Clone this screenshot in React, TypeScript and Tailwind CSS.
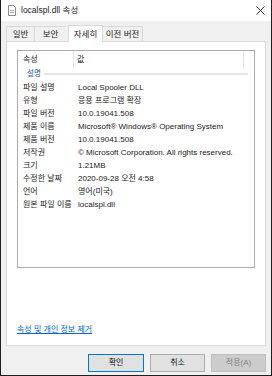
import React from 'react';

const rows: [string, string][] = [
  ['파일 설명', 'Local Spooler DLL'],
  ['유형', '응용 프로그램 확장'],
  ['파일 버전', '10.0.19041.508'],
  ['제품 이름', 'Microsoft® Windows® Operating System'],
  ['제품 버전', '10.0.19041.508'],
  ['저작권', '© Microsoft Corporation. All rights reserved.'],
  ['크기', '1.21MB'],
  ['수정한 날짜', '2020-09-28 오전 4:58'],
  ['언어', '영어(미국)'],
  ['원본 파일 이름', 'localspl.dll'],
];

const tabs: [string, string][] = [
  ['일반', 'w-[28px]'],
  ['보안', 'w-[32px]'],
  ['자세히', 'w-[35px]'],
  ['이전 버전', 'w-[40px]'],
];

const FileIcon = () => (
  <svg width="10" height="11" viewBox="0 0 10 11" className="shrink-0">
    <path d="M1.5 0.5h5l2 2v8h-7z" fill="#fff" stroke="#8a8a8a" />
    <path d="M3 5.5h4M3 7.5h4" stroke="#9bb0c8" />
  </svg>
);

const App: React.FC = () => {
  return (
    <div
      className="w-[272px] h-[376px] flex flex-col bg-[#f0f0f0] border-x border-b border-[#1f1f1f] text-[8px] text-[#1a1a1a] overflow-hidden"
      style={{ fontFamily: '"Liberation Sans", "Noto Sans CJK KR", sans-serif' }}
    >
      {/* title bar */}
      <div className="h-[21px] bg-white flex items-center pl-[6px] pr-[5px] shrink-0">
        <FileIcon />
        <span className="ml-[4px] text-[8.5px] text-[#222]">localspl.dll 속성</span>
        <svg width="9" height="9" viewBox="0 0 9 9" className="ml-auto mr-[1px]">
          <path d="M0.5 0.5l8 8M8.5 0.5l-8 8" stroke="#333" strokeWidth="1" />
        </svg>
      </div>

      <div className="flex-1 flex flex-col px-[5px] pt-[4px]">
        {/* tabs */}
        <div className="flex items-end h-[16px] relative z-10">
          {tabs.map(([t, w], i) =>
            i === 2 ? (
              <div
                key={t}
                className={`${w} h-[17px] -mb-px ml-[2px] bg-white border border-b-0 border-[#d9d9d9] flex items-center justify-center text-[8.5px]`}
              >
                {t}
              </div>
            ) : (
              <div
                key={t}
                className={`${w} h-[15px] flex items-center justify-center border-t border-[#d9d9d9] ${i === 0 ? 'border-l' : ''} ${i === 3 ? 'border-r' : ''} ${i === 1 ? 'border-l' : ''} text-[8.5px]`}
              >
                {t}
              </div>
            )
          )}
        </div>

        {/* tab panel */}
        <div className="h-[305px] bg-white border border-[#d9d9d9] flex flex-col px-[10px] pt-[8px]">
          <div className="h-[218px] border border-[#abadb3] flex flex-col">
            <div className="h-[17px] flex items-center shrink-0">
              <div className="w-[56px] h-full pl-[5px] flex items-center border-r border-[#e5e5e5]">속성</div>
              <div className="w-[170px] h-full pl-[3px] flex items-center border-r border-[#e5e5e5]">값</div>
            </div>
            <div className="flex items-center h-[12px] pl-[9px] pr-[6px]">
              <span className="text-[#1e5aa8] text-[7.5px]">설명</span>
              <div className="flex-1 ml-[3px] h-[2px] bg-[#e1e5f2]" />
            </div>
            <div className="flex flex-col pt-[1px]">
              {rows.map(([k, v]) => (
                <div key={k} className="h-[13px] flex items-center">
                  <div className="w-[56px] pl-[5px] whitespace-nowrap">{k}</div>
                  <div className="pl-[4px] whitespace-nowrap">{v}</div>
                </div>
              ))}
            </div>
          </div>
          <div className="mt-auto mb-[9px]">
            <span className="text-[#0066cc] underline">속성 및 개인 정보 제거</span>
          </div>
        </div>

        {/* buttons */}
        <div className="flex justify-end gap-[6px] mt-[8px]">
          <button className="w-[56px] h-[18px] bg-[#e1e1e1] border border-[#0078d7] text-[8px] text-[#111]">확인</button>
          <button className="w-[55px] h-[18px] bg-[#e1e1e1] border border-[#adadad] text-[8px] text-[#111]">취소</button>
          <button className="w-[55px] h-[18px] bg-[#cccccc] border border-[#bfbfbf] text-[8px] text-[#838383]">적용(A)</button>
        </div>
      </div>
    </div>
  );
};

export default App;
